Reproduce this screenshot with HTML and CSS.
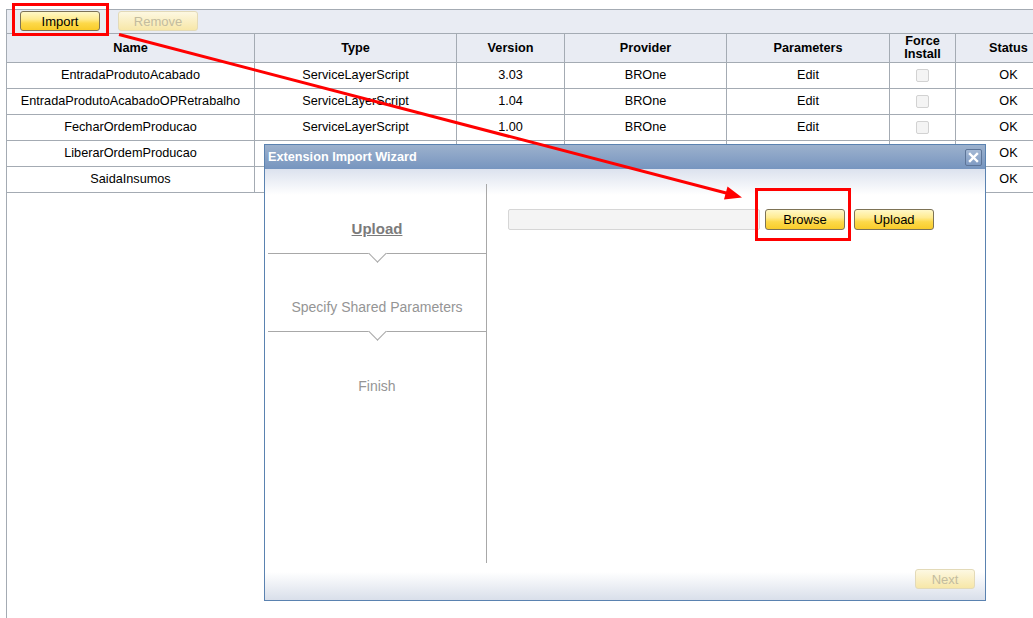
FILE: index.html
```html
<!DOCTYPE html>
<html lang="en">
<head>
<meta charset="utf-8">
<title>Extension Manager</title>
<link rel="stylesheet" href="styles.css">
</head>
<body>
<div class="page">
  <div class="toolbar">
    <button class="btn" type="button">Import</button>
    <button class="btn" type="button" disabled>Remove</button>
  </div>
  <div class="grid">
    <div class="cell th">Name</div>
    <div class="cell th">Type</div>
    <div class="cell th">Version</div>
    <div class="cell th">Provider</div>
    <div class="cell th">Parameters</div>
    <div class="cell th">Force<br>Install</div>
    <div class="cell th">Status</div>

    <div class="cell">EntradaProdutoAcabado</div>
    <div class="cell">ServiceLayerScript</div>
    <div class="cell">3.03</div>
    <div class="cell">BROne</div>
    <div class="cell">Edit</div>
    <div class="cell"><input class="check" type="checkbox" disabled></div>
    <div class="cell">OK</div>

    <div class="cell">EntradaProdutoAcabadoOPRetrabalho</div>
    <div class="cell">ServiceLayerScript</div>
    <div class="cell">1.04</div>
    <div class="cell">BROne</div>
    <div class="cell">Edit</div>
    <div class="cell"><input class="check" type="checkbox" disabled></div>
    <div class="cell">OK</div>

    <div class="cell">FecharOrdemProducao</div>
    <div class="cell">ServiceLayerScript</div>
    <div class="cell">1.00</div>
    <div class="cell">BROne</div>
    <div class="cell">Edit</div>
    <div class="cell"><input class="check" type="checkbox" disabled></div>
    <div class="cell">OK</div>

    <div class="cell">LiberarOrdemProducao</div>
    <div class="cell"></div>
    <div class="cell"></div>
    <div class="cell"></div>
    <div class="cell"></div>
    <div class="cell"></div>
    <div class="cell">OK</div>

    <div class="cell">SaidaInsumos</div>
    <div class="cell"></div>
    <div class="cell"></div>
    <div class="cell"></div>
    <div class="cell"></div>
    <div class="cell"></div>
    <div class="cell">OK</div>
  </div>
</div>

<div class="dialog">
  <div class="dialog-title">
    <span>Extension Import Wizard</span>
    <button class="close" type="button" aria-label="Close">
      <svg width="15" height="15" viewBox="0 0 15 15"><path d="M4 4 L11 11 M11 4 L4 11" stroke="#fff" stroke-width="2.4" stroke-linecap="square"/></svg>
    </button>
  </div>
  <div class="dialog-body">
    <div class="wizard">
      <ol class="steps">
        <li class="step step-first current">Upload</li>
        <li class="step">Specify Shared Parameters</li>
        <li class="step step-last">Finish</li>
      </ol>
      <div class="content">
        <div class="upload-row">
          <input class="file-field" type="text" aria-label="File">
          <button class="btn btn-tall" type="button">Browse</button>
          <button class="btn btn-tall upload" type="button">Upload</button>
        </div>
      </div>
    </div>
    <div class="footer">
      <button class="btn next" type="button" disabled>Next</button>
    </div>
  </div>
</div>

<svg class="annotations" width="1033" height="618" viewBox="0 0 1033 618">
  <rect x="13.5" y="4.5" width="94" height="30" fill="none" stroke="#ff0000" stroke-width="3"/>
  <rect x="756.5" y="189.5" width="93" height="50" fill="none" stroke="#ff0000" stroke-width="3"/>
  <line x1="119" y1="34.5" x2="728" y2="193.5" stroke="#ff0000" stroke-width="3"/>
  <polygon points="742,197.5 724,199.5 727.5,186.5" fill="#ff0000"/>
</svg>
</body>
</html>
```

FILE: styles.css
```css
* {
  box-sizing: border-box;
}

html,
body {
  margin: 0;
  padding: 0;
  overflow: hidden;
  background: #fff;
}

body {
  position: relative;
  width: 1033px;
  height: 618px;
  font-family: "Liberation Sans", Arial, sans-serif;
  color: #000;
}

.page {
  margin: 9px 0 0 6px;
  width: 1080px;
  height: 609px;
  border-left: 1px solid #a4abb3;
  border-top: 1px solid #a4abb3;
}

.toolbar {
  height: 24px;
  display: flex;
  align-items: center;
  gap: 18px;
  padding: 0 0 1px 13px;
  background: #e9ecf3;
  border-bottom: 1px solid #a4abb3;
}

.btn {
  width: 80px;
  height: 20px;
  padding: 0;
  margin: 0;
  font-family: "Liberation Sans", Arial, sans-serif;
  font-size: 13px;
  color: #000;
  border: 1px solid #7d7356;
  border-radius: 3px;
  background: linear-gradient(to bottom, #fff8c8 0%, #ffeb90 40%, #fdd94a 62%, #f9cc2a 100%);
}

.btn:disabled {
  color: #c3bc9f;
  border-color: #e3dab8;
  background: linear-gradient(to bottom, #fdf8e2 0%, #faefc4 50%, #f7e7a8 100%);
}

.btn-tall {
  height: 21px;
}

.grid {
  display: grid;
  grid-template-columns: 248px 202px 108px 162px 163px 66px 106px;
  font-size: 12.7px;
}

.cell {
  height: 26px;
  display: flex;
  align-items: center;
  justify-content: center;
  text-align: center;
  line-height: 13px;
  white-space: nowrap;
  border-right: 1px solid #a4abb3;
  border-bottom: 1px solid #a4abb3;
}

.th {
  height: 29px;
  font-weight: bold;
  background: #e9ecf3;
}

.check {
  appearance: none;
  -webkit-appearance: none;
  width: 13px;
  height: 13px;
  margin: 0;
  border: 1px solid #d2d2d2;
  border-radius: 2px;
  background: #f4f4f4;
}

/* dialog */
.dialog {
  position: absolute;
  left: 264px;
  top: 144px;
  z-index: 5;
  width: 722px;
  height: 457px;
  display: flex;
  flex-direction: column;
  background: #fff;
  border: 1px solid #5a82b0;
}

.dialog-title {
  flex: none;
  height: 24px;
  display: flex;
  align-items: center;
  justify-content: space-between;
  padding: 0 3px;
  color: #fff;
  font-weight: bold;
  font-size: 12.7px;
  background: linear-gradient(to bottom, #9cb1cd 0%, #8aa3c6 50%, #7695bf 100%);
}

.close {
  width: 17px;
  height: 17px;
  padding: 0;
  display: flex;
  align-items: center;
  justify-content: center;
  border: 1px solid #5d7598;
  border-radius: 2px;
  background: linear-gradient(to bottom, #a4b8d4 0%, #7f9bc3 100%);
}

.dialog-body {
  flex: 1;
  display: flex;
  flex-direction: column;
  background: linear-gradient(to bottom, #dce2ee 0px, #ffffff 26px, #ffffff calc(100% - 28px), #d9dfea 100%);
}

.wizard {
  height: 394px;
  display: flex;
  padding-top: 15px;
}

.steps {
  list-style: none;
  margin: 0 0 0 3px;
  padding: 0;
  width: 219px;
  border-right: 1px solid #a8a8a8;
}

.step {
  position: relative;
  height: 78px;
  display: flex;
  align-items: center;
  justify-content: center;
  padding-top: 29px;
  font-size: 14px;
  color: #959595;
  border-bottom: 1px solid #a8a8a8;
}

.step::after {
  content: "";
  position: absolute;
  left: calc(50% - 6px);
  bottom: -7px;
  width: 12px;
  height: 12px;
  background: #fff;
  border-right: 1px solid #a8a8a8;
  border-bottom: 1px solid #a8a8a8;
  transform: rotate(45deg);
}

.step-first {
  height: 70px;
  padding-top: 19px;
}

.step-last {
  border-bottom: none;
}

.step-last::after {
  display: none;
}

.current {
  font-size: 15px;
  font-weight: bold;
  color: #7b7b7b;
  text-decoration: underline;
}

.content {
  flex: 1;
  padding: 25px 0 0 21px;
}

.upload-row {
  display: flex;
  align-items: flex-start;
}

.file-field {
  width: 252px;
  height: 21px;
  margin: 0 5px 0 0;
  border: 1px solid #d6d6d6;
  border-radius: 2px;
  background: #f4f4f4;
}

.upload {
  margin-left: 9px;
}

.footer {
  flex: 1;
  display: flex;
  justify-content: flex-end;
  align-items: flex-start;
  padding: 6px 10px 0 0;
}

.next {
  width: 60px;
}

.annotations {
  position: absolute;
  left: 0;
  top: 0;
  z-index: 10;
  pointer-events: none;
}
```
